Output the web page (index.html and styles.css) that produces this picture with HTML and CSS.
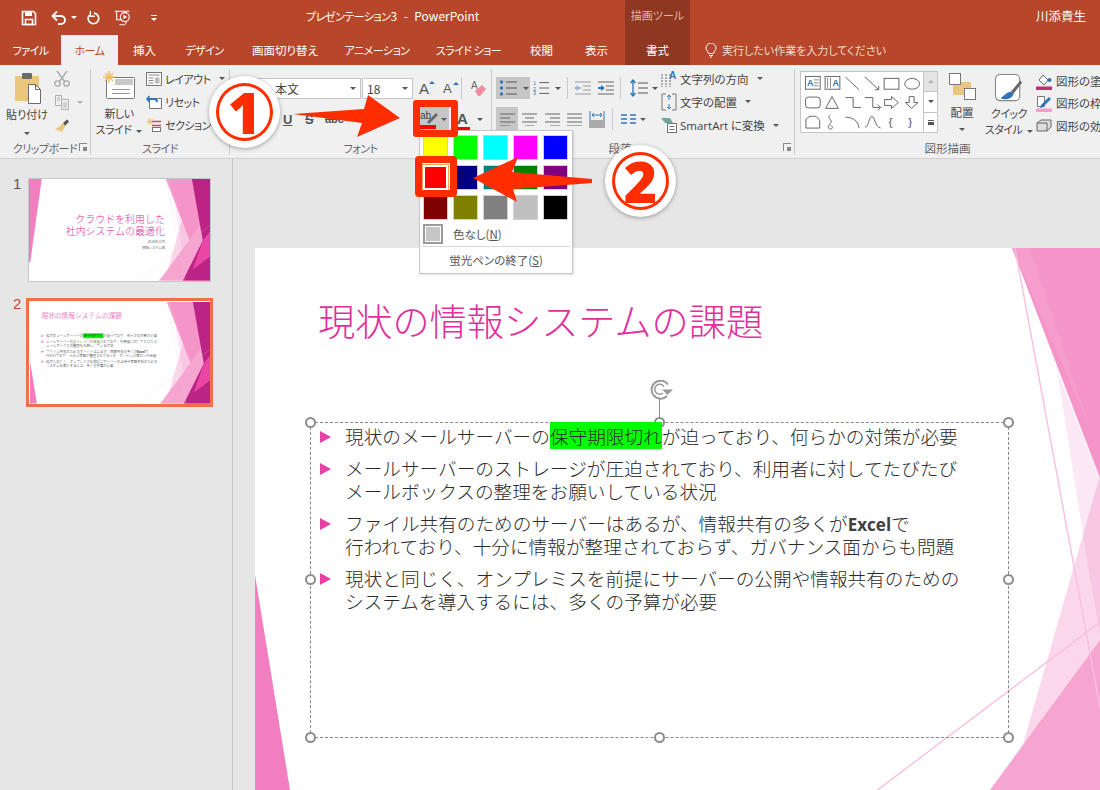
FILE: index.html
```html
<!DOCTYPE html>
<html lang="ja">
<head>
<meta charset="utf-8">
<title>プレゼンテーション3 - PowerPoint</title>
<link rel="stylesheet" href="styles.css">
</head>
<body>
<svg class="defs" width="0" height="0" aria-hidden="true">
  <symbol id="deco" viewBox="0 0 1000 562">
    <polygon points="802,122 845,232 880,320 860,470 835,330" fill="#fce8f4"/>
    <polygon points="735,562 755,542 890,70 1000,70 1000,562" fill="#ee7bbd" fill-opacity=".3"/>
    <polygon points="757,0 1000,0 1000,420 910,400" fill="#f594c8"/>
    <polygon points="757,0 775,0 835,180" fill="#f59dcc"/>
    <polygon points="735,542 845,392 1000,180 1000,562 715,562" fill="#f5a5d0"/>
    <polygon points="900,0 1000,0 1000,562 850,562 960,340" fill="#bb2484"/>
    <polygon points="960,340 1000,290 1000,430 905,500" fill="#e946a6"/>
    <line x1="760" y1="0" x2="864" y2="562" stroke="#f9bfdf" stroke-width="1.4"/>
    <line x1="596" y1="562" x2="1000" y2="257" stroke="#f9bfdf" stroke-width="1.4"/>
  </symbol>
</svg>

<header class="titlebar">
  <div class="qat">
    <svg width="16" height="16" viewBox="0 0 16 16"><path d="M1.500 1.500h11l2 2v11h-13z" fill="none" stroke="#fff" stroke-width="1.600"/><rect x="4" y="2" width="7" height="4" fill="#fff"/><rect x="4.500" y="9.500" width="7" height="5" fill="none" stroke="#fff" stroke-width="1.500"/></svg>
    <svg class="q-undo" width="16" height="16" viewBox="0 0 16 16"><path d="M2 6h8a4 4 0 0 1 0 8H7" fill="none" stroke="#fff" stroke-width="1.800"/><path d="M6 1.500 1.500 6 6 10.500" fill="none" stroke="#fff" stroke-width="1.800"/></svg>
    <span class="q-caret"></span>
    <svg class="q-redo" width="14" height="16" viewBox="0 0 16 16"><path d="M9 2.500a6 6 0 1 1-5 2" fill="none" stroke="#fff" stroke-width="1.900"/><path d="M5 0v6H10" fill="none" stroke="#fff" stroke-width="1.500"/></svg>
    <svg class="q-show" width="18" height="18" viewBox="0 0 20 18"><path d="M1 1.500h16M3 1.500V11h6" fill="none" stroke="#fff" stroke-width="1.200"/><circle cx="12" cy="8" r="5" fill="none" stroke="#fff" stroke-width="1.200"/><path d="m10.500 5.500 4 2.500-4 2.500z" fill="#fff"/><path d="M6 16.500h6l2-3" fill="none" stroke="#fff"/></svg>
    <span class="q-more"></span>
  </div>
  <div class="doc-title"><span class="k">プレゼンテーション</span>3<span class="dash">-</span>PowerPoint</div>
  <div class="context-title">描画ツール</div>
  <div class="user">川添貴生</div>
</header>

<nav class="tabs">
  <span class="tab k">ファイル</span>
  <span class="tab tab-active k">ホーム</span>
  <span class="tab">挿入</span>
  <span class="tab k">デザイン</span>
  <span class="tab">画面切り替え</span>
  <span class="tab k">アニメーション</span>
  <span class="tab k">スライド ショー</span>
  <span class="tab">校閲</span>
  <span class="tab">表示</span>
  <span class="tab tab-context">書式</span>
  <span class="tellme">
    <svg width="12" height="15" viewBox="0 0 12 15"><path d="M3.500 10.500C3 8 1 7.500 1 5a5 5 0 0 1 10 0c0 2.500-2 3-2.500 5.500zM4 12.500h4M5 14h2" fill="none" stroke="#fff"/></svg>
    <span>実行したい作業を入力してください</span>
  </span>
</nav>

<section class="ribbon">
  <div class="group g-clip">
    <div class="body">
      <div class="big paste">
        <svg width="28" height="32" viewBox="0 0 28 32"><rect x="0" y="3" width="24" height="25" rx="1" fill="#eac77c"/><rect x="7" y="0" width="10" height="6" rx="1" fill="#6b6b6b"/><path d="M13.500 11.500h7l5 5v14h-12z" fill="#fff" stroke="#6b6b6b"/><path d="M20.500 11.500v5h5" fill="none" stroke="#6b6b6b"/></svg>
        <span class="big-label">貼り付け</span>
        <i class="caret"></i>
      </div>
      <div class="clip-tools">
        <svg width="16" height="17" viewBox="0 0 16 17"><path d="M3 1 11 12M13 1 5 12" stroke="#a8a8a8" stroke-width="1.300" fill="none"/><circle cx="3.500" cy="13.500" r="2.700" fill="none" stroke="#a8a8a8" stroke-width="1.300"/><circle cx="12.500" cy="13.500" r="2.700" fill="none" stroke="#a8a8a8" stroke-width="1.300"/></svg>
        <span class="row-c"><svg width="16" height="15" viewBox="0 0 16 15"><path d="M1.500.5h6v10h-6zM7.500 4.500h7v10h-7z" fill="#f0f0f0" stroke="#b0b0b0"/><path d="M9 8h4M9 10h4M9 12h4M3 3h3M3 5h3" stroke="#b0b0b0"/></svg><i class="caret light"></i></span>
        <svg width="16" height="16" viewBox="0 0 16 16"><path d="M9 5 13 1.500l2 2L11 8z" fill="#555"/><path d="M9 5l2.500 3-3.500 6L1 11c2-.5 5-3 8-6z" fill="#eac77c"/></svg>
      </div>
    </div>
    <div class="label k">クリップボード<i class="launcher"></i></div>
  </div>

  <div class="group g-slide">
    <div class="body">
      <div class="big newslide">
        <svg width="32" height="28" viewBox="0 0 32 28"><rect x="3.500" y="6.500" width="28" height="21" rx="1" fill="#fff" stroke="#777"/><rect x="12" y="8" width="18" height="6" fill="#c8c8c8"/><path d="M9 18.500h18M9 22.500h18" stroke="#999"/><path d="M6 0v12M0 6h12M2 2l8 8M10 2l-8 8" stroke="#f0c060" stroke-width="1.500"/></svg>
        <span class="big-label k">新しい<br>スライド<i class="caret inl"></i></span>
      </div>
      <ul class="cmds k">
        <li><svg width="16" height="14" viewBox="0 0 16 14"><rect x=".5" y=".5" width="15" height="13" fill="#fff" stroke="#777"/><path d="M2.500 3h11M2.500 6h5M2.500 8.500h5M2.500 11h5" stroke="#888"/><rect x="9" y="5.500" width="4.500" height="6" fill="#bbb"/></svg>レイアウト<i class="caret inl"></i></li>
        <li><svg width="16" height="14" viewBox="0 0 16 14"><rect x="3.500" y="3.500" width="12" height="10" fill="#fff" stroke="#777"/><path d="M1 4h7a3 3 0 0 1 3 3" fill="none" stroke="#2e75b6" stroke-width="2"/><path d="M3.500 1 1 4l2.500 3" fill="none" stroke="#2e75b6" stroke-width="1.500"/></svg>リセット</li>
        <li><svg width="16" height="14" viewBox="0 0 16 14"><path d="M4 0v7M.5 3.500h7M1.500 1l5 5M6.500 1l-5 5" stroke="#f0c060"/><path d="M6 3.500h9M6 7.500h9" stroke="#c0504d" stroke-width="1.300"/><rect x="6.500" y="9.500" width="8" height="4" fill="#fff" stroke="#777"/></svg>セクション</li>
      </ul>
    </div>
    <div class="label k">スライド</div>
  </div>

  <div class="group g-font">
    <div class="body col">
      <div class="row font-row1">
        <span class="select s-name">本文<i class="caret"></i></span>
        <span class="select s-size">18<i class="caret"></i></span>
        <span class="grow-a">A<sup></sup></span>
        <span class="grow-a small">A<sup></sup></span>
        <i class="vsep"></i>
        <svg class="eraser" width="16" height="17" viewBox="0 0 16 17"><text x="0" y="9" font-size="10" fill="#666" font-family="Liberation Sans">A</text><path d="M4 11 11 5l4 4-6 7H7z" fill="#ee8ea0"/></svg>
      </div>
      <div class="row font-row2">
        <span class="fmt u">U</span>
        <span class="fmt s">S</span>
        <span class="fmt abc">abc</span>
        <span class="fmt av">AV</span>
        <span class="hl-btn">
          <svg width="20" height="20" viewBox="0 0 20 20"><text x="1" y="10" font-size="10" fill="#444" font-family="Liberation Sans">ab</text><path d="M8 13 17 4l2 2-9 9z" fill="#666"/><rect x="1" y="16" width="16" height="4" fill="#f00"/></svg>
          <i class="caret"></i>
        </span>
        <span class="color-a">A<b></b></span><i class="caret"></i>
      </div>
    </div>
    <div class="label k">フォント</div>
  </div>

  <div class="group g-para">
    <div class="body">
      <div class="col para-tools">
        <div class="row para-row1">
          <span class="pbtn on bullets"><svg width="20" height="16" viewBox="0 0 20 16"><circle cx="2.500" cy="2" r="1.700" fill="#2e75b6"/><circle cx="2.500" cy="8" r="1.700" fill="#2e75b6"/><circle cx="2.500" cy="14" r="1.700" fill="#2e75b6"/><path d="M7 2h11M7 8h11M7 14h11" stroke="#555"/></svg><i class="caret"></i></span>
          <span class="pbtn numbers"><svg width="20" height="16" viewBox="0 0 20 16"><text x="0" y="5" font-size="6" fill="#2e75b6" font-family="Liberation Sans">1</text><text x="0" y="11" font-size="6" fill="#2e75b6" font-family="Liberation Sans">2</text><text x="0" y="16" font-size="6" fill="#2e75b6" font-family="Liberation Sans">3</text><path d="M7 2h11M7 8h11M7 14h11" stroke="#555"/></svg><i class="caret"></i></span>
          <i class="vsep"></i>
          <svg class="ind" width="17" height="14" viewBox="0 0 17 14"><path d="M1 1h16M9 5h8M9 9h8M1 13h16" stroke="#999"/><path d="M0 7l4-3v2h3v2H4v2z" fill="#9db8d2"/></svg>
          <svg class="ind" width="17" height="14" viewBox="0 0 17 14"><path d="M1 1h16M9 5h8M9 9h8M1 13h16" stroke="#666"/><path d="M8 7 4 4v2H1v2h3v2z" fill="#2e75b6"/></svg>
          <i class="vsep"></i>
          <span class="pbtn spacing"><svg width="18" height="18" viewBox="0 0 18 18"><path d="M3 1v16M0.500 4 3 1l2.500 3M0.500 14 3 17l2.500-3" fill="none" stroke="#2e75b6" stroke-width="1.300"/><path d="M8 4h10M8 9h10M8 14h10" stroke="#555"/></svg><i class="caret"></i></span>
        </div>
        <div class="row para-row2">
          <span class="abtn on"><svg width="15" height="13" viewBox="0 0 15 13"><path d="M0 1h15M0 5h10M0 9h15M0 13h10" stroke="#666"/></svg></span>
          <span class="abtn"><svg width="15" height="13" viewBox="0 0 15 13"><path d="M0 1h15M3 5h9M0 9h15M3 13h9" stroke="#666"/></svg></span>
          <span class="abtn"><svg width="15" height="13" viewBox="0 0 15 13"><path d="M0 1h15M5 5h10M0 9h15M5 13h10" stroke="#666"/></svg></span>
          <span class="abtn"><svg width="15" height="13" viewBox="0 0 15 13"><path d="M0 1h15M0 5h15M0 9h15M0 13h15" stroke="#666"/></svg></span>
          <span class="abtn"><svg width="16" height="17" viewBox="0 0 16 17"><path d="M1 0v9M15 0v9" stroke="#2e75b6"/><path d="M3 4h10M5 2 3 4l2 2M11 2l2 2-2 2" fill="none" stroke="#2e75b6"/><path d="M0 10h16M0 12h16M0 14h16M0 16h16" stroke="#666"/></svg></span>
          <i class="vsep"></i>
          <span class="pbtn columns"><svg width="15" height="11" viewBox="0 0 15 11"><path d="M0 1h6M0 5h6M0 9h6M9 1h6M9 5h6M9 9h6" stroke="#2e75b6" stroke-width="1.300"/></svg><i class="caret"></i></span>
        </div>
      </div>
      <ul class="cmds text-cmds">
        <li><svg width="16" height="18" viewBox="0 0 16 18"><path d="M1 4v13M5 4v13M9 4v13" stroke="#666" stroke-dasharray="2 1"/><text x="8" y="9" font-size="10" font-weight="700" fill="#2e75b6" font-family="Liberation Sans">A</text></svg><span>文字列の方向</span><i class="caret inl"></i></li>
        <li><svg width="16" height="18" viewBox="0 0 16 18"><path d="M5 1H1v16h4M11 1h4v16h-4" fill="none" stroke="#777"/><path d="M8 2v5M6 4l2-2 2 2M8 11v5M6 14l2 2 2-2" fill="none" stroke="#2e75b6"/></svg><span>文字の配置</span><i class="caret inl"></i></li>
        <li><svg width="16" height="16" viewBox="0 0 16 16"><path d="M0 1h9l3 5H4z" fill="#6fa89a"/><rect x="6.500" y="6.500" width="9" height="9" fill="#fff" stroke="#777"/><path d="M8.500 9.500h5M8.500 12.500h5" stroke="#777"/></svg><span><span class="latin">SmartArt</span> に変換</span><i class="caret inl"></i></li>
      </ul>
    </div>
    <div class="label para-label">段落<i class="launcher"></i></div>
  </div>

  <div class="group g-draw">
    <div class="body">
      <div class="gallery">
        <svg width="122" height="60" viewBox="0 0 122 61" fill="none" stroke="#666">
          <rect x="3.500" y="4.500" width="15" height="13" fill="#fff"/><text x="5" y="14" font-size="9" font-weight="700" fill="#2e75b6" stroke="none" font-family="Liberation Sans">A</text><path d="M12 8h5M12 11h5M12 14h5" stroke="#888"/>
          <rect x="23.500" y="4.500" width="15" height="13"/><path d="M26 6v10M29 6v10" stroke="#888"/><text x="31" y="14" font-size="9" font-weight="700" fill="#2e75b6" stroke="none" font-family="Liberation Sans">A</text>
          <path d="M44 5l14 13"/><path d="M64 5l14 13M74 18h4v-4"/>
          <rect x="83.500" y="6.500" width="15" height="11"/><ellipse cx="112" cy="12" rx="7.500" ry="5.500"/>
          <rect x="3.500" y="25.500" width="15" height="11" rx="3"/><path d="M24 37h13l-6.500-12z"/><path d="M44 26h8v10h8"/><path d="M64 26h8v10h8M77 33l3 3-3 3"/>
          <path d="M84 28h7v-3l7 6-7 6v-3h-7z"/><path d="M109 25h5v6h4l-6.500 6-6.500-6h4z"/>
          <path d="M4 48l4-3h6l4 4v8H4z"/><path d="M28 44c-3 3 4 5 1 8s-3 6 0 6 2-3 0-4"/><path d="M44 46c7 0 13 3 14 11"/><path d="M64 56c4 0 4-11 7-11s3 11 9 12"/>
          <text x="88" y="55" font-size="12" fill="#555" stroke="none" font-family="Liberation Sans">{</text><text x="108" y="55" font-size="12" fill="#555" stroke="none" font-family="Liberation Sans">}</text>
        </svg>
        <div class="gal-scroll"><span class="up"><i class="tri-up"></i></span><span><i class="caret"></i></span><span><i class="more-tri"></i></span></div>
      </div>
      <div class="big arrange">
        <svg width="27" height="27" viewBox="0 0 27 27"><rect x="4" y="9" width="18" height="13" fill="#eac77c"/><rect x=".5" y=".5" width="11" height="11" fill="#fff" stroke="#777"/><rect x="15.500" y="15.500" width="11" height="11" fill="#fff" stroke="#777"/></svg>
        <span class="big-label">配置</span><i class="caret"></i>
      </div>
      <div class="big quick">
        <svg width="30" height="30" viewBox="0 0 30 30"><rect x=".5" y=".5" width="26" height="28" rx="5" fill="#fff" stroke="#888" stroke-width="1.200"/><path d="M17 19 27 7l2 2-9 12z" fill="#666"/><path d="M17 19c-4 0-7 4-11 7 4 2 12 2 14-5z" fill="#2e75b6"/></svg>
        <span class="big-label k">クイック<br>スタイル<i class="caret inl"></i></span>
      </div>
      <ul class="cmds shape-cmds">
        <li><svg width="16" height="17" viewBox="0 0 16 17"><path d="M3 7l4-5 5 5-4 5z" fill="#fff" stroke="#666"/><circle cx="13.500" cy="7" r="2" fill="#2e75b6"/><rect y="13.500" width="16" height="3.500" fill="#c0306f"/></svg>図形の塗りつぶし</li>
        <li><svg width="16" height="17" viewBox="0 0 16 17"><path d="M1.500 1.500h7v10h-7z" fill="#fff" stroke="#777"/><path d="M5 10 13 2l2 2-8 8-3 1z" fill="#2e75b6"/><rect y="13.500" width="16" height="3.500" fill="#f59ccb"/></svg>図形の枠線</li>
        <li><svg width="16" height="14" viewBox="0 0 16 14"><path d="M1 4 5 1h10v7l-4 4H1z" fill="#ddd" stroke="#666"/><path d="M1 4h10v8" fill="none" stroke="#666"/></svg>図形の効果</li>
      </ul>
    </div>
    <div class="label">図形描画</div>
  </div>
</section>

<main class="workspace">
  <aside class="pane">
    <div class="thumb-row">
      <span class="num">1</span>
      <div class="thumb">
        <div class="slide mini">
          <svg class="deco"><use href="#deco"/></svg>
          <svg class="deco" viewBox="0 0 1000 562"><polygon points="0,0 70,0 7,460 0,460" fill="#f27dbf"/></svg>
          <div class="cover">
            <h2>クラウドを利用した<br>社内システムの最適化</h2>
            <p>2016年11月</p>
            <p>情報システム部</p>
          </div>
        </div>
      </div>
    </div>
    <div class="thumb-row current">
      <span class="num">2</span>
      <div class="thumb">
        <div class="slide mini">
          <svg class="deco"><use href="#deco"/></svg>
          <svg class="deco" viewBox="0 0 1000 562"><polygon points="0,327 35,542 38,562 0,562" fill="#f27dbf"/></svg>
          <h1 class="slide-title">現状の情報システムの課題</h1>
          <div class="textbox">
            <p>現状のメールサーバーの<mark>保守期限切れ</mark>が迫っており、何らかの対策が必要</p>
            <p>メールサーバーのストレージが圧迫されており、利用者に対してたびたび<br>メールボックスの整理をお願いしている状況</p>
            <p>ファイル共有のためのサーバーはあるが、情報共有の多くが<b>Excel</b>で<br>行われており、十分に情報が整理されておらず、ガバナンス面からも問題</p>
            <p>現状と同じく、オンプレミスを前提にサーバーの公開や情報共有のための<br>システムを導入するには、多くの予算が必要</p>
          </div>
        </div>
      </div>
    </div>
  </aside>
  <div class="canvas">
    <div class="slide">
      <svg class="deco"><use href="#deco"/></svg>
      <svg class="deco" viewBox="0 0 1000 562"><polygon points="0,327 35,542 38,562 0,562" fill="#f27dbf"/></svg>
      <h1 class="slide-title">現状の情報システムの課題</h1>
      <div class="textbox editing">
        <svg class="rotate" width="24" height="20" viewBox="0 0 24 20"><path d="M18 4.500A9 9 0 1 0 17 16" fill="none" stroke="#9a9a9a" stroke-width="2"/><path d="M14 6.500A5 5 0 1 0 13 13" fill="none" stroke="#9a9a9a" stroke-width="1.500"/><path d="M12 9.500h11l-5.500 5.500z" fill="#9a9a9a"/></svg>
        <i class="stem"></i>
        <i class="h tl"></i><i class="h tc"></i><i class="h tr"></i><i class="h ml"></i><i class="h mr"></i><i class="h bl"></i><i class="h bc"></i><i class="h br"></i>
        <p>現状のメールサーバーの<mark>保守期限切れ</mark>が迫っており、何らかの対策が必要</p>
        <p>メールサーバーのストレージが圧迫されており、利用者に対してたびたび<br>メールボックスの整理をお願いしている状況</p>
        <p>ファイル共有のためのサーバーはあるが、情報共有の多くが<b>Excel</b>で<br>行われており、十分に情報が整理されておらず、ガバナンス面からも問題</p>
        <p>現状と同じく、オンプレミスを前提にサーバーの公開や情報共有のための<br>システムを導入するには、多くの予算が必要</p>
      </div>
    </div>
  </div>
</main>

<div class="menu">
  <div class="swatches">
    <i class="sw c-yellow"></i><i class="sw c-lime"></i><i class="sw c-cyan"></i><i class="sw c-magenta"></i><i class="sw c-blue"></i>
    <i class="sw c-red picked"></i><i class="sw c-navy"></i><i class="sw c-teal"></i><i class="sw c-green"></i><i class="sw c-purple"></i>
    <i class="sw c-maroon"></i><i class="sw c-olive"></i><i class="sw c-gray"></i><i class="sw c-silver"></i><i class="sw c-black"></i>
  </div>
  <div class="menu-none"><i class="none-box"></i><span>色なし(<u>N</u>)</span></div>
  <div class="menu-end">蛍光ペンの終了(<u>S</u>)</div>
</div>

<div class="call-box box1"></div>
<div class="call-box box2"></div>
<svg class="arrows" width="1100" height="790" viewBox="0 0 1100 790">
  <polygon points="293,114 364,109 368,95 400,118 357,137 362,123" fill="#ff2d00"/>
  <polygon points="473,178 518,157 512,172 592,179 592,183 513,189 517,202" fill="#ff2d00"/>
</svg>
<div class="badge b1"><span>1</span></div>
<div class="badge b2"><span>2</span></div>
</body>
</html>
```
FILE: styles.css
```css
* { box-sizing: border-box; }
html, body { margin: 0; padding: 0; }
body {
  position: relative;
  width: 1100px;
  height: 790px;
  overflow: hidden;
  background: #e6e6e6;
  color: #444;
  font-family: "Noto Sans CJK JP", "Noto Sans", sans-serif;
  font-feature-settings: "palt";
  font-size: 11.5px;
}
.defs { position: absolute; }
ul { list-style: none; margin: 0; padding: 0; }
i { display: block; font-style: normal; }
.k { font-size: 11px; letter-spacing: -.5px; }

/* title bar */
.titlebar { display: flex; height: 35px; background: #b7472a; color: #fff; align-items: stretch; }
.qat { width: 306px; display: flex; align-items: center; padding-left: 21px; }
.q-undo { margin-left: 14px; }
.q-caret { width: 0; height: 0; margin-left: 4px; border: 3px solid transparent; border-top-color: #fff; border-bottom: 0; }
.q-redo { margin-left: 9px; }
.q-show { margin-left: 14px; }
.q-more { width: 6px; height: 5px; margin-left: 19px; border-top: 1px solid #fff; position: relative; }
.q-more::after { content: ""; position: absolute; left: 0; top: 2px; border: 3px solid transparent; border-top-color: #fff; border-bottom: 0; }
.doc-title { width: 319px; line-height: 31px; font-size: 12px; }
.dash { margin: 0 6.500px; }
.context-title { width: 65px; background: #8f3720; color: #e3b5a6; text-align: center; line-height: 31px; font-size: 11px; }
.user { margin-left: auto; padding-right: 14px; line-height: 31px; font-size: 12.500px; }

/* tabs */
.tabs {
  display: grid;
  grid-template-columns: 61px 57px 53px 67px 94px 90px 93px 53px 57px 65px 1fr;
  height: 30px;
  background: #b7472a;
  color: #fff;
  align-items: stretch;
  font-size: 11.500px;
}
.tab { text-align: center; line-height: 30px; }
.tab-active { background: #f0f0f0; color: #b7472a; }
.tab-context { background: #8f3720; }
.tellme { display: flex; align-items: center; gap: 5px; padding-left: 15px; color: #f3d9d0; font-size: 11px; }

/* ribbon */
.ribbon { display: flex; height: 94px; background: #f0f0f0; border-bottom: 1px solid #d0d0d0; }
.group { display: flex; flex: none; flex-direction: column; margin: 4px 0 3px; border-right: 1px solid #c8c8c8; }
.body { flex: 1; display: flex; min-height: 0; }
.col { flex-direction: column; display: flex; }
.row { display: flex; align-items: center; }
.label { position: relative; height: 18px; padding-top: 3px; line-height: 17px; text-align: center; color: #666; }
.g-clip { width: 91px; }
.g-slide { width: 139px; }
.g-font { width: 262px; }
.g-para { width: 303px; }
.g-draw { flex: 1; min-width: 0; border-right: 0; overflow: hidden; }
.launcher { position: absolute; right: 3px; top: 6px; width: 8px; height: 8px; border-left: 1px solid #888; border-top: 1px solid #888; }
.launcher::after { content: ""; position: absolute; right: 0; bottom: 0; width: 4px; height: 4px; background: #888; }

.caret { width: 0; height: 0; border: 3px solid transparent; border-top-color: #555; border-bottom: 0; flex: none; }
.caret.inl { display: inline-block; margin-left: 5px; vertical-align: middle; }
.caret.light { border-top-color: #b0b0b0; margin-left: 7px; }
.big { display: flex; flex: none; flex-direction: column; align-items: center; }
.big-label { line-height: 16px; text-align: center; white-space: nowrap; }
.paste { width: 54px; padding-top: 4px; font-size: 11px; }
.paste svg { margin-left: 4px; }
.paste .big-label { margin-top: 1px; }
.paste .caret { margin-top: 10px; }
.clip-tools { display: flex; flex-direction: column; gap: 8px; padding: 1px 0 0 0; }
.row-c { display: flex; align-items: center; }
.newslide { width: 52px; padding: 2px 0 0 4px; }
.newslide .big-label { margin-top: 6px; }
.cmds { display: flex; flex-direction: column; flex: none; }
.cmds li { display: flex; align-items: center; height: 24px; gap: 3px; white-space: nowrap; }
.cmds li .caret.inl { margin-left: 5px; }
.g-slide .cmds { margin: -2px 0 0 3px; }

/* font group */
.font-row1 { height: 30px; padding: 8px 0 0 6px; }
.select { display: flex; flex: none; align-items: center; height: 21px; background: #fff; border: 1px solid #c6c6c6; padding-left: 4px; font-size: 12px; }
.select .caret { margin-left: auto; margin-right: 4px; }
.s-name { width: 125px; padding-left: 38px; }
.s-size { width: 51px; margin-left: 1px; }
.grow-a { position: relative; flex: none; width: 18px; margin-left: 6px; font: 15px "Liberation Sans", sans-serif; color: #555; }
.grow-a sup { position: absolute; left: 10px; top: 1px; border: 3px solid transparent; border-bottom-color: #2e75b6; border-top: 0; }
.grow-a.small { font-size: 13px; }
.vsep { width: 1px; height: 22px; background: #c8c8c8; flex: none; }
.eraser { margin-left: 9px; flex: none; }
.font-row2 { height: 24px; margin-top: 8px; padding-left: 53px; font-family: "Liberation Sans", sans-serif; }
.fmt { font-size: 13px; font-weight: 700; color: #555; }
.u { text-decoration: underline; width: 22px; }
.s { width: 20px; text-decoration: line-through; }
.abc { width: 40px; font-size: 11px; text-decoration: line-through; }
.av { width: 52px; font-size: 11px; }
.hl-btn { display: flex; align-items: center; gap: 2px; width: 32px; height: 24px; padding: 2px; background: #c6c6c6; flex: none; }
.color-a { position: relative; width: 20px; margin-left: 8px; font: 700 15px/18px "Liberation Sans", sans-serif; color: #555; }
.color-a b { position: absolute; left: 0; bottom: -2px; width: 13px; height: 3px; background: #f00; }

/* paragraph group */
.para-tools { width: 169px; padding-left: 4px; flex: none; }
.para-row1 { height: 22px; margin-top: 8px; }
.para-row2 { height: 24px; margin-top: 8px; }
.pbtn { display: flex; align-items: center; gap: 4px; height: 22px; flex: none; }
.pbtn.on { background: #c6c6c6; }
.bullets { width: 34px; padding-left: 3px; }
.numbers { width: 31px; padding-left: 3px; }
.ind { margin-left: 6px; flex: none; }
.para-row1 .vsep { margin-left: 6px; }
.spacing { margin-left: 9px; }
.abtn { display: flex; align-items: center; justify-content: center; width: 22px; height: 24px; margin-right: .5px; flex: none; }
.abtn.on { background: #c6c6c6; }
.para-row2 .vsep { margin: 0 8px 0 3px; }
.text-cmds { margin-top: -2px; }
.text-cmds li { gap: 3px; }
.latin { font-family: "Open Sans", "Liberation Sans", sans-serif; }
.para-label { padding-right: 46px; }

/* drawing group */
.gallery { display: flex; flex: none; width: 138px; height: 62px; margin: 2px 0 0 5px; background: #fff; border: 1px solid #c6c6c6; }
.gallery svg { flex: none; }
.gal-scroll { display: flex; flex-direction: column; flex: 1; border-left: 1px solid #c6c6c6; }
.gal-scroll span { flex: 1; display: flex; align-items: center; justify-content: center; border-bottom: 1px solid #c6c6c6; }
.gal-scroll span:last-child { border-bottom: 0; }
.gal-scroll .up { background: #e4e4e4; }
.tri-up { border: 3px solid transparent; border-bottom-color: #b0b0b0; border-top: 0; }
.more-tri { width: 6px; height: 5px; border-top: 1px solid #555; border-bottom: 3px solid #555; }
.arrange { width: 40px; margin-left: 4px; padding-top: 4px; }
.arrange .big-label { margin-top: 4px; }
.arrange .caret { margin-top: 8px; }
.quick { width: 44px; margin-left: 5px; padding-top: 5px; }
.quick .big-label { margin-top: 3px; }
.shape-cmds { padding: 1px 0 0 5px; }
.shape-cmds li { height: 22.500px; gap: 4px; }

/* workspace */
.workspace { display: flex; height: 631px; }
.pane { width: 233px; flex: none; border-right: 1px solid #c6c6c6; padding-top: 19px; }
.thumb-row { position: relative; width: 187px; height: 104px; margin: 0 0 16px 26px; }
.thumb-row.current { height: 109px; }
.num { position: absolute; left: -13px; top: -3px; font: 15px "Liberation Sans", sans-serif; color: #555; }
.current .num { color: #c8482a; }
.thumb { position: absolute; left: 2px; top: 0; width: 183px; height: 104px; border: 1px solid #c6c6c6; background: #fff; overflow: hidden; }
.current .thumb { left: 0; top: 0; width: 187px; height: 109px; border: 3px solid #f0704c; }
.current .thumb .slide { left: 1px; top: 1px; }
.slide { position: relative; width: 1000px; height: 562px; background: #fff; overflow: hidden; flex: none; }
.slide.mini { position: absolute; left: 0; top: 0; transform: scale(.181); transform-origin: 0 0; }
.deco { position: absolute; left: 0; top: 0; width: 1000px; height: 562px; }
.cover { position: relative; width: 751px; padding-top: 190px; text-align: right; font-feature-settings: normal; }
.cover h2 { margin: 0 0 22px; font-size: 55px; line-height: 63px; font-weight: 300; color: #e22f9c; }
.cover p { margin: 0 0 12px; font-size: 18px; line-height: 20px; color: #666; }
.slide-title { position: relative; margin: 0; padding: 47px 0 0 63px; height: 97px; font-size: 37.200px; line-height: 50px; font-weight: 300; font-feature-settings: normal; color: #e22f9c; }
.textbox { position: absolute; left: 55px; top: 174px; width: 699px; height: 316px; padding: 1px 0 0 34px; font-size: 18.650px; line-height: 23px; color: #2a2a2a; font-feature-settings: normal; font-weight: 300; white-space: nowrap; }
.textbox p { position: relative; margin: 0 0 9px; }
.textbox p::before { content: ""; position: absolute; left: -25px; top: 7px; border: 6.500px solid transparent; border-left: 11px solid #e83fa5; border-right: 0; }
.textbox mark { background: #00ff00; color: inherit; }
.textbox b { font-family: "Open Sans", sans-serif; font-weight: 700; font-size: 17px; line-height: 1; color: #404040; }
.editing { border: 1px dashed #888; }
.h { position: absolute; width: 11px; height: 11px; border-radius: 50%; background: #fff; border: 2px solid #8c8c8c; }
.tl { left: -6px; top: -6px; } .tc { left: 343px; top: -6px; } .tr { right: -6px; top: -6px; }
.ml { left: -6px; top: 151px; } .mr { right: -6px; top: 151px; }
.bl { left: -6px; bottom: -6px; } .bc { left: 343px; bottom: -6px; } .br { right: -6px; bottom: -6px; }
.rotate { position: absolute; left: 339px; top: -43px; }
.stem { position: absolute; left: 348px; top: -25px; width: 1px; height: 20px; background: #8c8c8c; }
.canvas { flex: 1; min-width: 0; overflow: hidden; padding: 89px 0 0 22px; }

/* highlight menu */
.menu { position: absolute; left: 419px; top: 130px; width: 154px; height: 144px; background: #fff; border: 1px solid #c6c6c6; box-shadow: 1px 1px 2px rgba(0,0,0,.12); color: #555; }
.swatches { display: grid; grid-template-columns: repeat(5, 25px); gap: 5px; padding: 4px 0 0 3px; }
.sw { height: 25px; border: 1px solid #d0d0d0; }
.picked { border: 2px solid #fff; box-shadow: 0 0 0 1px #f5a55a; }
.c-yellow { background: #ff0; } .c-lime { background: #0f0; } .c-cyan { background: #0ff; } .c-magenta { background: #f0f; } .c-blue { background: #00f; }
.c-red { background: #f00; } .c-navy { background: #000080; } .c-teal { background: #008080; } .c-green { background: #008000; } .c-purple { background: #800080; }
.c-maroon { background: #800000; } .c-olive { background: #808000; } .c-gray { background: #808080; } .c-silver { background: silver; } .c-black { background: #000; }
.menu-none { display: flex; align-items: center; gap: 10px; height: 21px; margin: 3px 3px 0; }
.none-box { width: 20px; height: 20px; background: #c6c6c6; border: 2px solid #9a9a9a; outline: 1px solid #fff; outline-offset: -3px; }
.menu-end { margin: 2px 2px 0; border-top: 1px solid #d8d8d8; text-align: center; line-height: 26px; }

/* annotations */
.call-box { position: absolute; border-radius: 3px; }
.box1 { left: 413px; top: 100px; width: 45px; height: 37px; border: 7px solid #ff2d00; }
.box2 { left: 415px; top: 156px; width: 42px; height: 41px; border: 7px solid #ff2d00; border-radius: 4px; }
.arrows { position: absolute; left: 0; top: 0; pointer-events: none; }
.badge { position: absolute; width: 71px; height: 72px; border-radius: 50%; background: #fff; box-shadow: 0 1px 4px rgba(0,0,0,.35); display: flex; align-items: center; justify-content: center; }
.badge::before { content: ""; position: absolute; inset: 7px; border: 3px solid #ff2d00; border-radius: 50%; }
.badge span { font: 800 57px/1 "Open Sans", "Noto Sans", sans-serif; color: #ff2d00; }
.b1 { left: 209px; top: 76px; }
.b2 { left: 605px; top: 145px; }
```
